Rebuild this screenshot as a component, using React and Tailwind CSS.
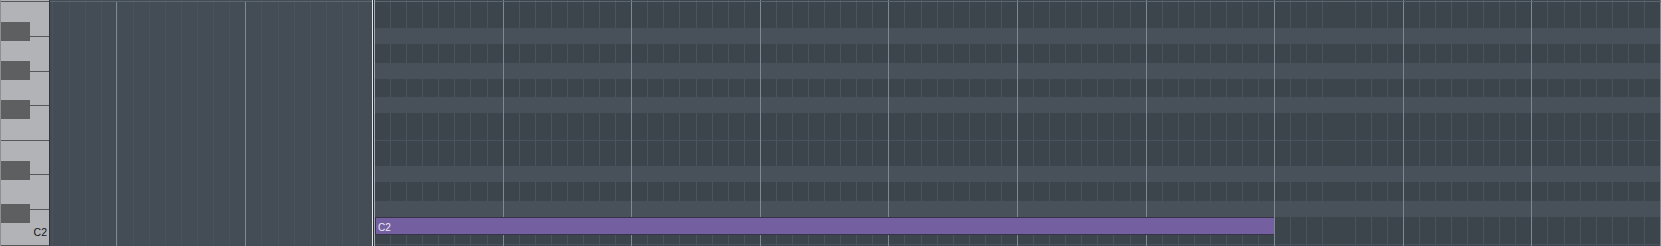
import React from "react";

const BAR =
  "bg-[image:repeating-linear-gradient(90deg,transparent_0px,transparent_127.6px,#7a8b97_127.6px,#7a8b97_128.6px)]";
const DARK =
  "bg-[#3c444c] bg-[image:repeating-linear-gradient(90deg,transparent_0px,transparent_127.6px,#7a8b97_127.6px,#7a8b97_128.6px),repeating-linear-gradient(90deg,transparent_0px,transparent_15.075px,#4b545e_15.075px,#4b545e_16.075px)]";
const LIGHT = "bg-[#48505a] " + BAR;
const HLINE = "bg-[#4a535d] " + BAR;

function Keyboard() {
  const line = "h-px bg-[#55575a]";
  const white = "bg-[#b2b3b6]";
  return (
    <div className="relative flex w-[49px] shrink-0 flex-col border-l border-[#8e8f92] bg-[#b2b3b6]">
      <div className="h-px bg-[#b2b3b6]" />
      <div className={line} />
      <div className={`h-[34px] ${white}`} />
      <div className={line} />
      <div className={`h-[34px] ${white}`} />
      <div className={line} />
      <div className={`h-[33px] ${white}`} />
      <div className={line} />
      <div className={`h-[34px] ${white}`} />
      <div className={line} />
      <div className={`h-[33px] ${white}`} />
      <div className={line} />
      <div className={`h-[34px] ${white}`} />
      <div className={line} />
      <div className={`flex h-[35px] items-end justify-end pb-[8px] pr-[2px] ${white}`}>
        <span className="font-['Liberation_Sans',Arial,sans-serif] text-[10.5px] leading-none text-[#141414]">
          C2
        </span>
      </div>
      <div className={line} />
      {/* black keys */}
      <div className="absolute left-0 top-[22px] h-[19px] w-[29px] bg-[#5d5f61]" />
      <div className="absolute left-0 top-[61px] h-[19px] w-[29px] bg-[#5d5f61]" />
      <div className="absolute left-0 top-[100px] h-[19px] w-[29px] bg-[#5d5f61]" />
      <div className="absolute left-0 top-[161px] h-[19px] w-[29px] bg-[#5d5f61]" />
      <div className="absolute left-0 top-[204px] h-[19px] w-[29px] bg-[#5d5f61]" />
    </div>
  );
}

function PreArea() {
  return (
    <div className="flex w-[322px] shrink-0 flex-col">
      <div className="h-px bg-[#444c55]" />
      <div className="h-px bg-[#5b6671]" />
      <div className="flex-1 bg-[#444c55] bg-[image:repeating-linear-gradient(90deg,transparent_0px,transparent_66.3px,#7a8b97_66.3px,#7a8b97_67.3px,transparent_67.3px,transparent_128.6px),repeating-linear-gradient(90deg,transparent_0px,transparent_2.5px,#4a525b_2.5px,#4a525b_3.5px,transparent_3.5px,transparent_16.075px)]" />
    </div>
  );
}

function Playhead() {
  return (
    <div className="flex shrink-0">
      <div className="w-px bg-[#e4e4e4]" />
      <div className="w-px bg-[#2a3036]" />
      <div className="w-px bg-[#a3adb5]" />
    </div>
  );
}

function Grid() {
  return (
    <div className="flex w-[1286px] shrink-0 flex-col">
      <div className={`h-px ${DARK}`} />
      <div className="h-px bg-[#5b6671]" />
      <div className={`h-[26px] ${DARK}`} />
      <div className={`h-[16px] ${LIGHT}`} />
      <div className={`h-[19px] ${DARK}`} />
      <div className={`h-[16px] ${LIGHT}`} />
      <div className={`h-[18px] ${DARK}`} />
      <div className={`h-[16px] ${LIGHT}`} />
      <div className={`h-[27px] ${DARK}`} />
      <div className={`h-px ${HLINE}`} />
      <div className={`h-[25px] ${DARK}`} />
      <div className={`h-[16px] ${LIGHT}`} />
      <div className={`h-[19px] ${DARK}`} />
      <div className={`h-[16px] ${LIGHT}`} />
      <div className={`flex h-[18px] ${DARK}`}>
        <div className="flex h-[18px] w-[899px] items-start border-y border-l border-[#3a3347] bg-[#7460a0] pl-[2px] pt-[5px]">
          <span className="font-['Liberation_Sans',Arial,sans-serif] text-[10px] leading-none text-[#eeeaf6]">
            C2
          </span>
        </div>
      </div>
      <div className={`h-[9px] ${DARK}`} />
      <div className={`h-px ${HLINE}`} />
      <div className={`h-[1px] ${DARK}`} />
    </div>
  );
}

export default function App() {
  return (
    <div className="flex h-[246px] w-[1661px] overflow-hidden bg-[#3c444c]">
      <Keyboard />
      <div className="w-px shrink-0 bg-[#2f353b]" />
      <PreArea />
      <Playhead />
      <Grid />
    </div>
  );
}
